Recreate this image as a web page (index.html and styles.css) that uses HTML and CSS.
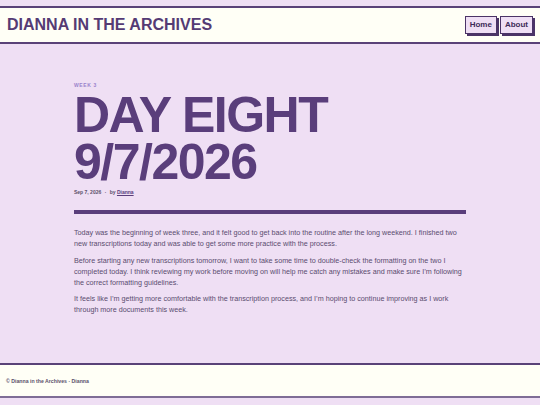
FILE: index.html
```html
<!DOCTYPE html>
<html lang="en">
<head>
<meta charset="utf-8">
<title>Day Eight 9/7/2026 – Dianna in the Archives</title>
<link rel="stylesheet" href="styles.css">
</head>
<body>
<header class="site-header">
  <a class="site-title" href="#">DIANNA IN THE ARCHIVES</a>
  <nav class="site-nav">
    <a class="nav-btn" href="#">Home</a>
    <a class="nav-btn" href="#">About</a>
  </nav>
</header>
<main class="main">
  <article class="post">
    <div class="post-label">WEEK 3</div>
    <h1 class="post-title">DAY EIGHT<br>9/7/2026</h1>
    <div class="post-meta">Sep 7, 2026 <span class="dot">·</span> by <a class="author" href="#">Dianna</a></div>
    <hr class="post-rule">
    <div class="post-body">
      <p>Today was the beginning of week three, and it felt good to get back into the routine after the long weekend. I finished two new transcriptions today and was able to get some more practice with the process.</p>
      <p>Before starting any new transcriptions tomorrow, I want to take some time to double-check the formatting on the two I completed today. I think reviewing my work before moving on will help me catch any mistakes and make sure I’m following the correct formatting guidelines.</p>
      <p>It feels like I’m getting more comfortable with the transcription process, and I’m hoping to continue improving as I work through more documents this week.</p>
    </div>
  </article>
</main>
<footer class="site-footer">
  <span class="footer-text">© Dianna in the Archives · Dianna</span>
</footer>
</body>
</html>
```
FILE: styles.css
```css
* { box-sizing: border-box; }
html, body { height: 100%; }
body {
  margin: 0;
  padding: 6px 0 7px;
  min-height: 100vh;
  display: flex;
  flex-direction: column;
  background: #efdff4;
  font-family: "Liberation Sans", Arial, sans-serif;
  color: #4e3d66;
}
.site-header {
  display: flex;
  align-items: center;
  justify-content: space-between;
  height: 38px;
  padding: 0 7px;
  background: #fffff6;
  border-top: 2px solid #5a4278;
  border-bottom: 2px solid #5a4278;
}
.site-title {
  font-size: 16px;
  font-weight: bold;
  color: #553b74;
  text-decoration: none;
  line-height: 1;
}
.site-nav {
  display: flex;
  gap: 3px;
}
.nav-btn {
  display: block;
  font-size: 8px;
  line-height: 10px;
  font-weight: bold;
  color: #3e2b58;
  text-decoration: none;
  padding: 3px 4px;
  background: #efdff4;
  border: 1px solid #4b3466;
  box-shadow: 2px 2px 0 #4b3466;
}
.main {
  flex: 1;
  padding: 38px 0 20px;
}
.post {
  width: 392px;
  margin: 0 auto;
}
.post-label {
  font-size: 5px;
  line-height: 6px;
  font-weight: bold;
  letter-spacing: 0.12em;
  color: #9a82cc;
}
.post-title {
  margin: 3.5px 0 0;
  font-size: 50px;
  line-height: 47.5px;
  font-weight: bold;
  letter-spacing: -0.03em;
  color: #5a3e7b;
}
.post-meta {
  margin-top: 1px;
  font-size: 5px;
  line-height: 8px;
  font-weight: bold;
  color: #5b506a;
}
.post-meta .dot { margin: 0 2px; }
.author {
  color: #5a3e7b;
  text-decoration: underline;
  text-decoration-thickness: 1px;
}
.post-rule {
  margin: 14.5px 0 0;
  height: 4px;
  border: 0;
  background: #5a3e7b;
}
.post-body {
  margin-top: 13px;
}
.post-body p {
  margin: 0 0 5.5px;
  font-size: 7.2px;
  line-height: 11px;
  color: #5a4c6f;
}
.site-footer {
  display: flex;
  align-items: center;
  height: 35px;
  padding: 0 6px;
  background: #fffff6;
  border-top: 2px solid #5a4278;
  border-bottom: 2px solid #7f6d96;
}
.footer-text {
  font-size: 5.2px;
  font-weight: bold;
  color: #5b506a;
}
```
